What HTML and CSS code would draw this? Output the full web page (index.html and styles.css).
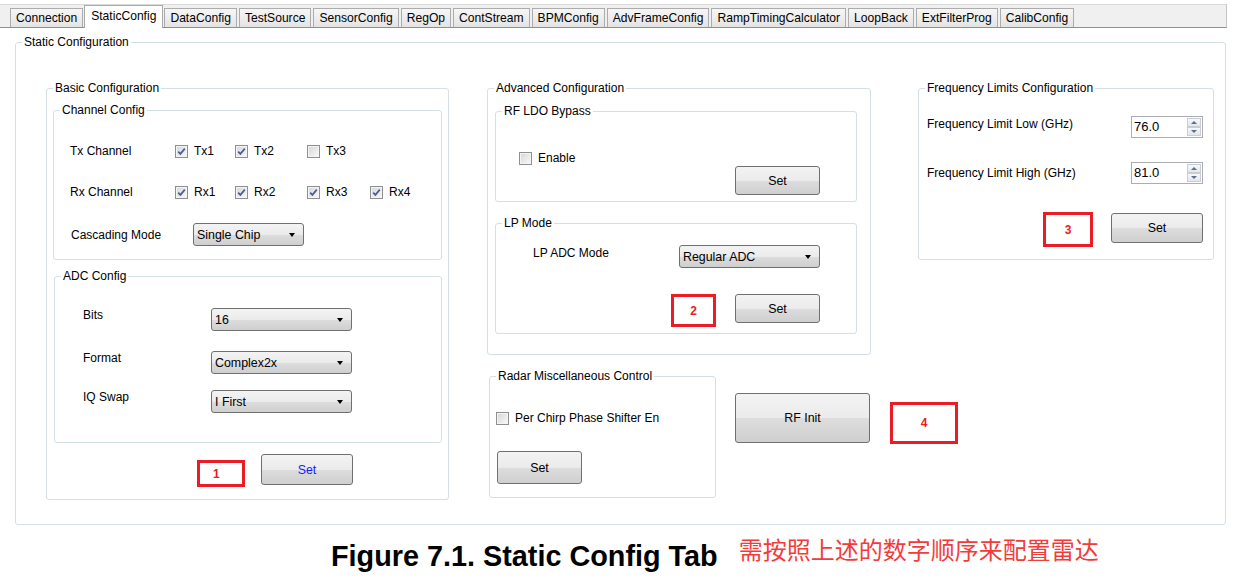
FILE: index.html
```html
<!DOCTYPE html>
<html lang="en">
<head>
  <meta charset="UTF-8" />
  <title>StaticConfig</title>
  <link rel="stylesheet" href="styles.css">
</head>
<body>
  <div class="tabs">
    <div class="tab">Connection</div>
    <div class="tab active">StaticConfig</div>
    <div class="tab">DataConfig</div>
    <div class="tab">TestSource</div>
    <div class="tab">SensorConfig</div>
    <div class="tab">RegOp</div>
    <div class="tab">ContStream</div>
    <div class="tab">BPMConfig</div>
    <div class="tab">AdvFrameConfig</div>
    <div class="tab">RampTimingCalculator</div>
    <div class="tab">LoopBack</div>
    <div class="tab">ExtFilterProg</div>
    <div class="tab">CalibConfig</div>
  </div>

  <fieldset class="group outer">
    <legend>Static Configuration</legend>
    <div class="columns">

      <!-- left column -->
      <fieldset class="group basic">
        <legend>Basic Configuration</legend>
        <fieldset class="group channel">
          <legend>Channel Config</legend>
          <div class="chan-grid">
            <span class="lbl">Tx Channel</span>
            <label class="chk"><span class="cb on"><svg viewBox="0 0 11 11"><path d="M2.2 5.6 L4.4 7.9 L8.8 2.6"/></svg></span>Tx1</label>
            <label class="chk"><span class="cb on"><svg viewBox="0 0 11 11"><path d="M2.2 5.6 L4.4 7.9 L8.8 2.6"/></svg></span>Tx2</label>
            <label class="chk"><span class="cb"></span>Tx3</label>
            <span></span>
            <span class="lbl">Rx Channel</span>
            <label class="chk"><span class="cb on"><svg viewBox="0 0 11 11"><path d="M2.2 5.6 L4.4 7.9 L8.8 2.6"/></svg></span>Rx1</label>
            <label class="chk"><span class="cb on"><svg viewBox="0 0 11 11"><path d="M2.2 5.6 L4.4 7.9 L8.8 2.6"/></svg></span>Rx2</label>
            <label class="chk"><span class="cb on"><svg viewBox="0 0 11 11"><path d="M2.2 5.6 L4.4 7.9 L8.8 2.6"/></svg></span>Rx3</label>
            <label class="chk"><span class="cb on"><svg viewBox="0 0 11 11"><path d="M2.2 5.6 L4.4 7.9 L8.8 2.6"/></svg></span>Rx4</label>
          </div>
          <div class="cascade">
            <span class="lbl">Cascading Mode</span>
            <div class="combo w-casc"><span>Single Chip</span><i class="arrow"></i></div>
          </div>
        </fieldset>

        <fieldset class="group adc">
          <legend>ADC Config</legend>
          <div class="adc-row">
            <span class="lbl">Bits</span>
            <div class="combo w-adc"><span>16</span><i class="arrow"></i></div>
          </div>
          <div class="adc-row r2">
            <span class="lbl">Format</span>
            <div class="combo w-adc"><span>Complex2x</span><i class="arrow"></i></div>
          </div>
          <div class="adc-row r3">
            <span class="lbl">IQ Swap</span>
            <div class="combo w-adc"><span>I First</span><i class="arrow"></i></div>
          </div>
        </fieldset>

        <div class="basic-foot">
          <div class="mark m1">1</div>
          <button class="btn set-blue">Set</button>
        </div>
      </fieldset>

      <!-- middle column -->
      <div class="col-mid">
        <fieldset class="group advanced">
          <legend>Advanced Configuration</legend>
          <fieldset class="group ldo">
            <legend>RF LDO Bypass</legend>
            <label class="chk enable"><span class="cb"></span>Enable</label>
            <button class="btn set">Set</button>
          </fieldset>
          <fieldset class="group lp">
            <legend>LP Mode</legend>
            <div class="lp-row">
              <span class="lbl">LP ADC Mode</span>
              <div class="combo w-lp"><span>Regular ADC</span><i class="arrow"></i></div>
            </div>
            <div class="lp-foot">
              <div class="mark m2">2</div>
              <button class="btn set">Set</button>
            </div>
          </fieldset>
        </fieldset>

        <div class="mid-bottom">
          <fieldset class="group radar">
            <legend>Radar Miscellaneous Control</legend>
            <label class="chk phase"><span class="cb"></span>Per Chirp Phase Shifter En</label>
            <button class="btn set tall">Set</button>
          </fieldset>
          <button class="btn rfinit">RF Init</button>
          <div class="mark m4">4</div>
        </div>
      </div>

      <!-- right column -->
      <fieldset class="group freq">
        <legend>Frequency Limits Configuration</legend>
        <div class="freq-row lo">
          <span class="lbl">Frequency Limit Low (GHz)</span>
          <div class="spin"><span class="val">76.0</span><span class="arrows"><i class="up"></i><i class="down"></i></span></div>
        </div>
        <div class="freq-row hi">
          <span class="lbl">Frequency Limit High (GHz)</span>
          <div class="spin"><span class="val">81.0</span><span class="arrows"><i class="up"></i><i class="down"></i></span></div>
        </div>
        <div class="freq-foot">
          <div class="mark m3">3</div>
          <button class="btn set wide">Set</button>
        </div>
      </fieldset>

    </div>
  </fieldset>

  <div class="caption">
    <span class="fig">Figure 7.1. Static Config Tab</span>
    <span class="note">需按照上述的数字顺序来配置雷达</span>
  </div>
</body>
</html>
```

FILE: styles.css
```css
body {
  margin: 0;
  background: #fff;
  color: #000;
  font-family: 'Liberation Sans', Arial, sans-serif;
  font-size: 12px;
}

/* tab strip */
.tabs {
  display: flex;
  align-items: flex-end;
  box-sizing: border-box;
  width: 1227px;
  height: 24px;
  margin-top: 4px;
  padding-left: 10px;
  background: #f0f0f0;
  border-top: 1px solid #dadada;
  border-bottom: 1px solid #8e8f8f;
  border-right: 1px solid #c4c4c4;
}
.tab {
  height: 18px;
  line-height: 18px;
  padding: 0 5px;
  margin-right: 2px;
  border: 1px solid #acacac;
  border-bottom: none;
  background: linear-gradient(#f6f6f6, #e4e4e4);
  font-size: 12.1px;
  white-space: nowrap;
}
.tab.active {
  height: 22px;
  line-height: 20px;
  margin: 0 1px -1px -1px;
  padding: 0 6px;
  background: #fff;
  border-color: #a9a9a9;
}

/* group boxes: legends sit 9px in from the border */
.group {
  margin: 0;
  padding: 0;
  min-width: 0;
  border: 1px solid #d5dfe6;
  border-radius: 3px;
}
.group > legend {
  margin-left: 6px;
  padding: 0 2px;
  line-height: 14px;
}
.outer {
  width: 1211px;
  box-sizing: border-box;
  margin: 7px 0 0 15px;
  padding: 32px 0 24px 0;
}
.columns {
  display: flex;
  align-items: flex-start;
  padding-left: 30px;
}
.lbl {
  white-space: nowrap;
}

/* basic configuration */
.basic {
  flex: none;
  width: 403px;
  box-sizing: border-box;
  padding: 8px 0 12px 0;
}
.channel {
  margin: 0 6px;
  padding: 27px 0 13px 0;
}
.chan-grid {
  display: grid;
  grid-template-columns: 105px 60px 72px 63px auto;
  row-gap: 27px;
  padding-left: 16px;
  line-height: 14px;
}
.chk {
  display: flex;
  align-items: center;
  white-space: nowrap;
}
.cb {
  width: 11px;
  height: 11px;
  margin-right: 6px;
  border: 1px solid #8e8f8f;
  background: linear-gradient(135deg, #d6d6d6, #f9f9f9);
  box-shadow: inset 0 0 0 1px #f4f4f4;
  flex: none;
}
.cb svg {
  display: block;
  width: 11px;
  height: 11px;
}
.cb path {
  fill: none;
  stroke: #4a5e92;
  stroke-width: 1.7;
}
.cascade {
  display: flex;
  align-items: center;
  margin-top: 24px;
  padding-left: 17px;
}
.cascade .lbl {
  width: 122px;
}
.combo {
  display: flex;
  align-items: center;
  justify-content: space-between;
  box-sizing: border-box;
  height: 23px;
  padding: 0 8px 0 3px;
  border: 1px solid #707070;
  border-radius: 3px;
  background: linear-gradient(#f3f3f3 0%, #ebebeb 50%, #dddddd 51%, #cfcfcf 100%);
  font-size: 12.4px;
}
.arrow {
  width: 0;
  height: 0;
  border-top: 4px solid #000;
  border-left: 3.5px solid transparent;
  border-right: 3.5px solid transparent;
}
.w-casc { width: 111px; }
.w-adc { width: 141px; }
.w-lp { width: 141px; }

.adc {
  margin: 9px 6px 0 7px;
  padding: 25px 0 29px 0;
}
.adc-row {
  display: flex;
  align-items: flex-start;
  padding-left: 28px;
}
.adc-row .lbl {
  width: 128px;
  line-height: 14px;
}
.adc-row.r2 { margin-top: 20px; }
.adc-row.r3 { margin-top: 16px; }

.basic-foot {
  display: flex;
  align-items: flex-start;
  margin-top: 11px;
  padding-left: 150px;
}
.mark {
  box-sizing: border-box;
  border: 3px solid #ec1c24;
  color: #ec1c24;
  font-weight: bold;
  display: flex;
  align-items: center;
  justify-content: center;
  flex: none;
}
.m1 {
  width: 48px;
  height: 27px;
  margin: 6px 16px 0 0;
  justify-content: flex-start;
  padding-left: 13px;
}
.btn {
  box-sizing: border-box;
  height: 29px;
  padding: 0;
  border: 1px solid #707070;
  border-radius: 3px;
  background: linear-gradient(#f3f3f3 0%, #ebebeb 50%, #dddddd 51%, #cfcfcf 100%);
  font-family: inherit;
  font-size: 12.4px;
  color: #000;
  flex: none;
}
.set-blue {
  width: 92px;
  height: 31px;
  color: #1a1aff;
}
.set { width: 85px; }
.set.tall { height: 33px; }
.set.wide { width: 92px; height: 30px; }

/* middle column */
.col-mid {
  flex: none;
  width: 384px;
  margin-left: 38px;
}
.advanced {
  padding: 9px 0 20px 0;
}
.ldo {
  display: flex;
  flex-direction: column;
  margin: 0 13px 0 7px;
  padding: 33px 0 6px 0;
}
.ldo .enable {
  margin-left: 23px;
  line-height: 14px;
}
.ldo .set {
  align-self: flex-end;
  margin: 1px 36px 0 0;
}
.lp {
  margin: 14px 13px 0 7px;
  padding: 15px 0 6px 0;
}
.lp-row {
  display: flex;
  align-items: flex-start;
}
.lp-row .lbl {
  width: 146px;
  margin-top: 1px;
  padding-left: 37px;
  line-height: 14px;
}
.lp-foot {
  display: flex;
  justify-content: flex-end;
  align-items: flex-start;
  margin-top: 26px;
  padding-right: 36px;
}
.m2 {
  width: 45px;
  height: 33px;
  margin-right: 19px;
}
.mid-bottom {
  display: flex;
  align-items: flex-start;
  margin-top: 14px;
}
.radar {
  flex: none;
  width: 227px;
  box-sizing: border-box;
  margin-left: 2px;
  padding: 28px 0 13px 0;
}
.radar .phase {
  margin-left: 6px;
  line-height: 14px;
}
.radar .set {
  display: block;
  margin: 26px 0 0 7px;
}
.rfinit {
  width: 135px;
  height: 50px;
  margin: 24px 0 0 19px;
}
.m4 {
  width: 68px;
  height: 42px;
  margin: 33px 0 0 20px;
}

/* right column */
.freq {
  flex: none;
  width: 296px;
  box-sizing: border-box;
  margin-left: 47px;
  padding: 21px 0 12px 0;
}
.freq-row {
  display: flex;
  align-items: flex-start;
  justify-content: space-between;
  padding: 0 10px 0 8px;
  line-height: 14px;
}
.freq-row.lo .lbl { margin-top: 1px; }
.freq-row.hi { margin-top: 24px; }
.freq-row.hi .lbl { margin-top: 4px; }
.spin {
  display: flex;
  box-sizing: border-box;
  width: 72px;
  height: 22px;
  border: 1px solid #abadb3;
  background: #fff;
}
.spin .val {
  flex: 1;
  padding-left: 2px;
  line-height: 20px;
  font-size: 13px;
}
.spin .arrows {
  display: flex;
  flex-direction: column;
  width: 14px;
  padding: 1px 1px 1px 0;
}
.spin .arrows i {
  flex: 1;
  display: flex;
  align-items: center;
  justify-content: center;
  border: 1px solid #c9ced6;
  background: linear-gradient(#f7f8fa, #e3e7ec);
}
.spin .up::after {
  content: '';
  border-bottom: 3px solid #5b6f8e;
  border-left: 3px solid transparent;
  border-right: 3px solid transparent;
}
.spin .down::after {
  content: '';
  border-top: 3px solid #5b6f8e;
  border-left: 3px solid transparent;
  border-right: 3px solid transparent;
}
.freq-foot {
  display: flex;
  justify-content: flex-end;
  align-items: flex-start;
  margin-top: 29px;
  padding-right: 10px;
}
.m3 {
  width: 50px;
  height: 35px;
  margin-right: 18px;
  margin-top: -1px;
}

/* caption */
.caption {
  display: flex;
  align-items: flex-start;
  padding-left: 331px;
}
.fig {
  margin-top: 15px;
  font-size: 28.8px;
  font-weight: bold;
  line-height: 32px;
}
.note {
  margin: 10px 0 0 21px;
  font-family: 'Noto Sans CJK SC', sans-serif;
  font-size: 24px;
  line-height: 28px;
  color: #f23c3c;
}
```
